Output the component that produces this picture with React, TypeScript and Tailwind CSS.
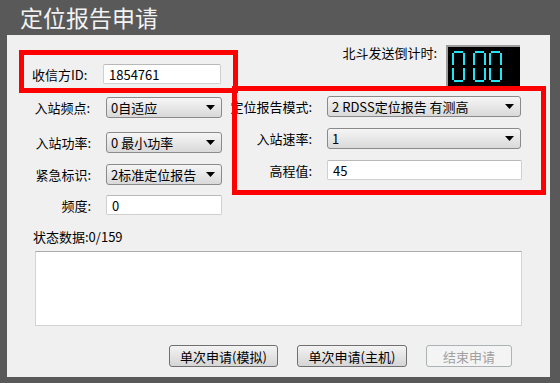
const font = { fontFamily: '"Noto Sans CJK SC", "Liberation Sans", sans-serif' };

function Arrow() {
  return (
    <svg width="9" height="5" viewBox="0 0 9 5" className="shrink-0">
      <path d="M0 0 H9 L4.5 5 Z" fill="#000" />
    </svg>
  );
}

function Select({ value, width }: { value: string; width: string }) {
  return (
    <div
      className={`${width} h-[21px] flex items-center justify-between pl-[4px] pr-[6px] rounded-[3px] border border-[#8a8a8a] bg-gradient-to-b from-[#f6f6f6] to-[#d9d9d9] text-[13px] leading-none text-black`}
    >
      <span>{value}</span>
      <Arrow />
    </div>
  );
}

function Input({ value, width }: { value: string; width: string }) {
  return (
    <div
      className={`${width} h-[20px] flex items-center pl-[5px] rounded-[2px] border border-[#cfcfcf] border-t-[#b9b9b9] bg-white text-[13px] leading-none text-black`}
    >
      {value}
    </div>
  );
}

function Zero({ x }: { x: number }) {
  const c = "#22e4f2";
  return (
    <g transform={`translate(${x} 6)`}>
      <rect x="2" y="0" width="9" height="2" fill={c} />
      <rect x="0" y="2" width="2" height="12" fill={c} />
      <rect x="11" y="2" width="2" height="12" fill={c} />
      <rect x="0" y="17" width="2" height="12" fill={c} />
      <rect x="11" y="17" width="2" height="12" fill={c} />
      <rect x="2" y="29" width="9" height="2" fill={c} />
    </g>
  );
}

function Led() {
  return (
    <div className="mt-[10px] mr-[30px] w-[74px] h-[42px] bg-black border-t-2 border-l-2 border-[#9c9c9c]">
      <svg width="72" height="40" viewBox="2 2 72 40">
        <Zero x={6} />
        <Zero x={27} />
        <Zero x={43} />
      </svg>
    </div>
  );
}

function Row({
  label,
  labelW,
  gap,
  mt,
  children,
}: {
  label: string;
  labelW: string;
  gap: string;
  mt: string;
  children: React.ReactNode;
}) {
  return (
    <div className={`flex items-center ${mt}`}>
      <div className={`${labelW} ${gap} text-right text-[13px] leading-none text-black`}>{label}</div>
      {children}
    </div>
  );
}

export default function App() {
  return (
    <div className="relative w-[560px] h-[383px] bg-[#595959] overflow-hidden" style={font}>
      <div className="h-[35px] pl-[20px] text-[23px] leading-[35px] text-[#f2f2f2]">定位报告申请</div>

      <div className="ml-[7px] w-[543px] h-[342px] bg-[#f0f0f0] flex flex-col">
        {/* top row */}
        <div className="flex items-start h-[51px]">
          <div className="mt-[29px] ml-[25px] flex items-center">
            <div className="w-[71px] text-[13px] leading-none text-black">收信方ID:</div>
            <Input value="1854761" width="w-[118px]" />
          </div>
          <div className="ml-auto mt-[10px] mr-[9px] text-[13px] leading-[16px] text-black">北斗发送倒计时:</div>
          <Led />
        </div>

        {/* two columns */}
        <div className="flex mt-[10px]">
          <div className="w-[215px] flex flex-col">
            <Row label="入站频点:" labelW="w-[83px]" gap="mr-[16px]" mt="mt-[1px]">
              <Select value="0自适应" width="w-[116px]" />
            </Row>
            <Row label="入站功率:" labelW="w-[84px]" gap="mr-[15px]" mt="mt-[14px]">
              <Select value="0 最小功率" width="w-[116px]" />
            </Row>
            <Row label="紧急标识:" labelW="w-[84px]" gap="mr-[15px]" mt="mt-[11px]">
              <Select value="2标准定位报告" width="w-[116px]" />
            </Row>
            <Row label="频度:" labelW="w-[84px]" gap="mr-[15px]" mt="mt-[10px]">
              <Input value="0" width="w-[116px]" />
            </Row>
          </div>
          <div className="flex flex-col">
            <Row label="定位报告模式:" labelW="w-[90px]" gap="mr-[15px]" mt="mt-0">
              <Select value="2 RDSS定位报告 有测高" width="w-[194px]" />
            </Row>
            <Row label="入站速率:" labelW="w-[90px]" gap="mr-[15px]" mt="mt-[11px]">
              <Select value="1" width="w-[194px]" />
            </Row>
            <Row label="高程值:" labelW="w-[90px]" gap="mr-[15px]" mt="mt-[11px]">
              <Input value="45" width="w-[195px]" />
            </Row>
          </div>
        </div>

        <div className="mt-[14px] ml-[26px] text-[13px] leading-[16px] text-black">状态数据:0/159</div>
        <div className="mt-[6px] ml-[28px] w-[487px] h-[75px] bg-white border border-[#d4d4d4] border-t-[#acacac]" />

        <div className="mt-[19px] ml-[162px] flex gap-[19px] text-[13px] leading-none">
          <button className="w-[109px] h-[22px] rounded-[3px] border border-[#707070] bg-gradient-to-b from-[#f3f3f3] to-[#d5d5d5] text-black">
            单次申请(模拟)
          </button>
          <button className="w-[110px] h-[22px] rounded-[3px] border border-[#707070] bg-gradient-to-b from-[#f3f3f3] to-[#d5d5d5] text-black">
            单次申请(主机)
          </button>
          <button className="w-[86px] h-[22px] rounded-[3px] border border-[#adb2b5] bg-[#f4f4f4] text-[#a0a0a0]">
            结束申请
          </button>
        </div>
      </div>

      {/* annotation boxes */}
      <div className="absolute left-[19px] top-[50px] w-[219px] h-[43px] border-[5px] border-[#ff0000]" />
      <div className="absolute left-[232px] top-[86px] w-[314px] h-[109px] border-[5px] border-[#ff0000]" />
    </div>
  );
}
